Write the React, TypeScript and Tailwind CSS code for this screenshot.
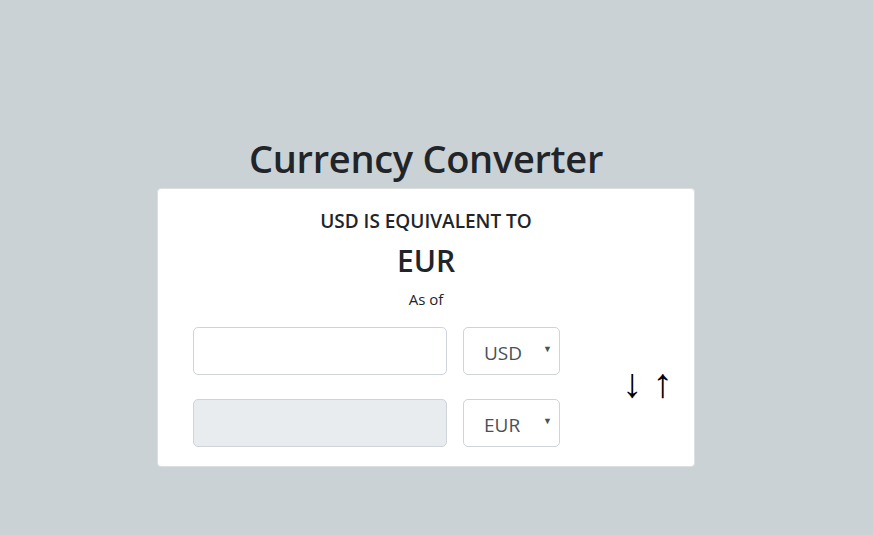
import React from 'react';

function CurrencyRow({ code, disabled }: { code: string; disabled?: boolean }) {
  return (
    <div className="flex items-center">
      <input
        type="number"
        disabled={disabled}
        className={`w-[254px] h-[48px] rounded-[5px] border border-[#ced4da] px-4 text-[20px] text-[#495057] outline-none ${
          disabled ? 'bg-[#e9ecef]' : 'bg-white'
        }`}
      />
      <div className="relative ml-[16px] w-[97px] h-[48px] rounded-[5px] border border-[#ced4da] bg-white">
        <span className="absolute left-[20px] top-[13px] text-[19px] leading-[24px] text-[#495057]">{code}</span>
        <span className="absolute right-[7px] top-[15px] text-[9px] leading-[12px] text-[#495057]">▼</span>
      </div>
    </div>
  );
}

export default function App() {
  return (
    <div
      className="min-h-[535px] w-full bg-[#cbd2d6] text-[#212529]"
      style={{ fontFamily: '"Open Sans", "Noto Sans", sans-serif' }}
    >
      <div className="ml-[157px] w-[538px] pt-[131px]">
        <h1 className="text-center text-[38px] leading-[54px] font-semibold tracking-[-0.3px]">Currency Converter</h1>
        <div className="mt-[3px] h-[279px] rounded-[4px] border border-[#dcdfe2] bg-white">
          <div className="pt-[20px] text-center">
            <h5 className="text-[19px] leading-[24px] font-semibold">USD IS EQUIVALENT TO</h5>
            <h2 className="mt-[8px] text-[30px] leading-[40px] font-semibold">EUR</h2>
            <p className="mt-[8px] text-[15px] leading-[20px]">As of</p>
          </div>
          <div className="mt-[18px] flex items-center pl-[35px]">
            <div className="flex flex-col gap-[24px]">
              <CurrencyRow code="USD" />
              <CurrencyRow code="EUR" disabled />
            </div>
            <div className="ml-[62px] -mt-[12px] flex gap-[10px] text-[41px] leading-[44px] text-black">
              <span>↓</span>
              <span>↑</span>
            </div>
          </div>
        </div>
      </div>
    </div>
  );
}
